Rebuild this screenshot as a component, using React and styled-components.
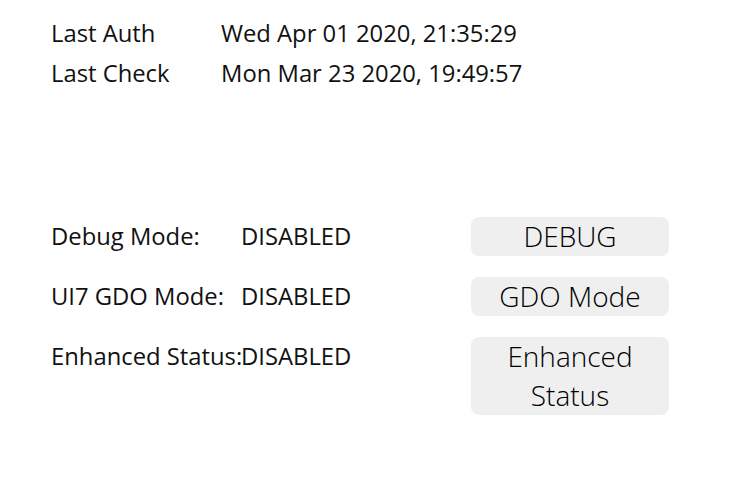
import React from "react";
import styled, { createGlobalStyle } from "styled-components";

const GlobalStyle = createGlobalStyle`
  body {
    margin: 0;
    background: #fff;
    font-family: "Open Sans", "Liberation Sans", sans-serif;
    color: #111;
  }
`;

const Page = styled.div`
  padding: 13px 0 0 51px;
`;

const InfoTable = styled.div`
  display: grid;
  grid-template-columns: 170px auto;
  font-size: 23.8px;
  line-height: 40px;
`;

const Settings = styled.div`
  margin-top: 124px;
  display: grid;
  grid-template-columns: 190px 230px 198px;
  row-gap: 21px;
  align-items: start;
`;

const Label = styled.div`
  font-size: 23.8px;
  line-height: 39px;
  white-space: nowrap;
`;

const Value = styled.div`
  font-size: 23.8px;
  line-height: 39px;
`;

const ActionButton = styled.button`
  font-family: inherit;
  font-size: 28px;
  font-weight: 300;
  line-height: 39px;
  color: #000;
  background: #efefef;
  border: none;
  border-radius: 8px;
  padding: 0 10px;
  width: 198px;
  text-align: center;
`;

const settings = [
  { label: "Debug Mode:", value: "DISABLED", action: "DEBUG" },
  { label: "UI7 GDO Mode:", value: "DISABLED", action: "GDO Mode" },
  { label: "Enhanced Status:", value: "DISABLED", action: "Enhanced Status" },
];

export default function App() {
  return (
    <>
      <GlobalStyle />
      <Page>
        <InfoTable>
          <div>Last Auth</div>
          <div>Wed Apr 01 2020, 21:35:29</div>
          <div>Last Check</div>
          <div>Mon Mar 23 2020, 19:49:57</div>
        </InfoTable>
        <Settings>
          {settings.map((s) => (
            <React.Fragment key={s.label}>
              <Label>{s.label}</Label>
              <Value>{s.value}</Value>
              <ActionButton>{s.action}</ActionButton>
            </React.Fragment>
          ))}
        </Settings>
      </Page>
    </>
  );
}
